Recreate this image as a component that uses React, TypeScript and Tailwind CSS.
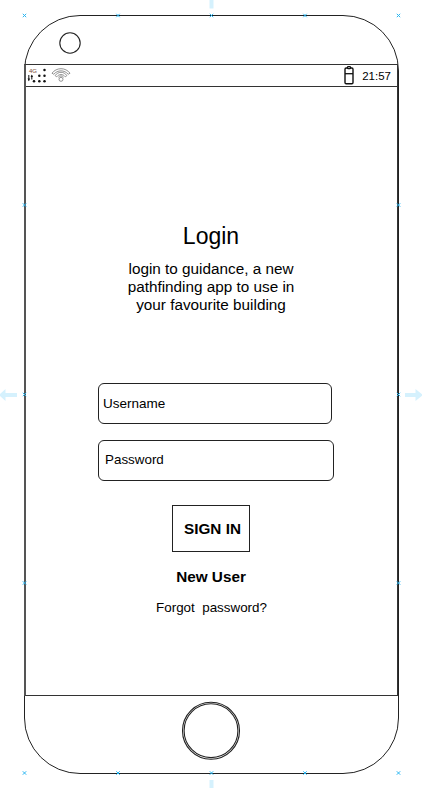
import React from "react";

const handles: [number, number][] = [
  [24.5, 15.5], [118, 15.5], [211.5, 15.5], [305, 15.5], [398.5, 15.5],
  [24.5, 205], [398.5, 205], [24.5, 394.5], [398.5, 394.5], [24.5, 583], [398.5, 583],
  [24.5, 773], [118, 773], [211.5, 773], [305, 773], [398.5, 773],
];

function SelectionOverlay() {
  return (
    <svg className="pointer-events-none absolute inset-0" width="422" height="788" fill="none">
      <g fill="#d5f1fd">
        <path d="M209.5 0h4v8.500h-4zM209.500 780h4v8h-4z" />
        <path d="M-1 395l6.500-6v4h11.500v4h-11.500v4z" />
        <path d="M423 395l-7.500-6v4h-10.500v4h10.500v4z" />
      </g>
      {handles.map(([x, y]) => (
        <path key={`${x}-${y}`} d={`M${x - 1.7} ${y - 1.7}l3.4 3.4m0 -3.4l-3.4 3.4`} stroke="#29b6f2" strokeWidth="1" />
      ))}
    </svg>
  );
}

function SignalIcon() {
  return (
    <div className="relative ml-[1px] h-[18px] w-[20px]">
      <span className="absolute left-[2px] top-[1px] text-[6px] leading-[7px] text-[#7a4a35]">4G</span>
      <svg className="absolute inset-0" width="20" height="18" fill="#111">
        <circle cx="17.500" cy="3" r="1.250" />
        <circle cx="12.300" cy="8.700" r="1.250" />
        <circle cx="17.500" cy="8.700" r="1.250" />
        <circle cx="7" cy="14.200" r="1.250" />
        <circle cx="12.300" cy="14.200" r="1.250" />
        <circle cx="17.500" cy="14.200" r="1.250" />
        <path d="M1.800 8v5.500M4.800 8.500v4" stroke="#222" strokeWidth="1.100" />
        <path d="M.6 11.500h2.400l-1.200 2.800zM3.600 10h2.400l-1.200-2.500z" />
      </svg>
    </div>
  );
}

function WifiIcon() {
  return (
    <svg className="ml-1 -mt-px" width="20" height="16" viewBox="0 0 20 16" fill="none" stroke="#777" strokeWidth=".8">
      <path d="M1 6.200C5.500.2 14.500.2 19 6.200L17.200 7.300C13.500 2.700 6.500 2.700 2.800 7.300Z" />
      <path d="M4.100 8.600C7.100 4.200 12.900 4.200 15.900 8.600L14.300 9.800C12 6.800 8 6.800 5.700 9.800Z" />
      <circle cx="10" cy="12.300" r="2" />
      <path d="M7.300 10.300C8.500 8.500 11.500 8.500 12.700 10.300" />
    </svg>
  );
}

function BatteryIcon() {
  return (
    <svg className="-mt-[2px]" width="12" height="20" viewBox="0 0 12 20" fill="none" stroke="#111">
      <rect x="2" y="3" width="8" height="15.700" rx="1.200" strokeWidth="1.400" />
      <path d="M2 8.700h8" strokeWidth="1.300" />
      <rect x="4.600" y="1.700" width="2.800" height="2" rx=".5" fill="white" strokeWidth="1.300" />
    </svg>
  );
}

export default function App() {
  return (
    <main className="relative h-[788px] w-[422px] overflow-hidden bg-white pl-6 pt-[15px] font-['Liberation_Sans',Arial,sans-serif] text-black">
      <div className="flex h-[758.5px] w-[375px] flex-col rounded-[56px] border border-[#222]">
        <header className="h-[48px] shrink-0 pl-[33.800px] pt-[16px]">
          <svg width="22" height="22" fill="none" stroke="#222" strokeWidth="1.100">
            <circle cx="11" cy="11" r="10.200" />
          </svg>
        </header>
        <section className="-ml-px flex h-[632px] shrink-0 flex-col border-y border-l-2 border-r border-l-[#555] border-r-[#333] border-y-[#333]">
          <div className="flex h-[22px] shrink-0 items-center border-b border-[#333]">
            <SignalIcon />
            <WifiIcon />
            <div className="ml-auto flex items-center gap-[7px] pr-[6px]">
              <BatteryIcon />
              <span className="text-[11.500px] leading-[14px]">21:57</span>
            </div>
          </div>
          <div className="flex flex-col items-center pr-px pt-[135px]">
            <h1 className="text-[23px] leading-[28px]">Login</h1>
            <p className="mt-[10px] whitespace-nowrap text-center text-[15.300px] leading-[18px]">
              login to guidance, a new<br />pathfinding app to use in<br />your favourite building
            </p>
          </div>
          <form className="flex flex-col pl-[72px] pt-[69px]">
            <div className="flex h-[41px] w-[234px] items-center rounded-[6px] border border-[#222] pl-1 pt-[2px] text-[13.500px]">Username</div>
            <div className="mt-4 flex h-[41px] w-[236px] items-center rounded-[6px] border border-[#222] pl-[6px] text-[13.400px]">Password</div>
            <button type="button" className="ml-[74px] mt-6 h-[47px] w-[78px] border border-[#222] pl-[3px] pt-[2px] text-[15.300px] font-bold">SIGN IN</button>
          </form>
          <div className="flex flex-col items-center pr-px pt-[16px]">
            <strong className="text-[15.300px] leading-[18px]">New User</strong>
            <span className="mt-[14px] whitespace-pre pl-px text-[13.400px] leading-[16px]">Forgot  password?</span>
          </div>
        </section>
        <footer className="flex justify-center pr-px pt-[5px]">
          <svg width="60" height="60" fill="none" stroke="#222" strokeWidth="1.100">
            <circle cx="30" cy="29.700" r="28.500" />
            <circle cx="30" cy="29.700" r="26.900" />
          </svg>
        </footer>
      </div>
      <SelectionOverlay />
    </main>
  );
}
